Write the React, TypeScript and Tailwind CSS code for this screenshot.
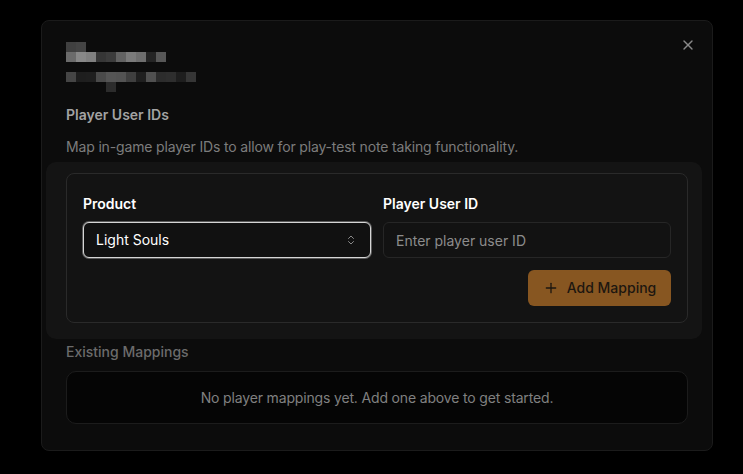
import React from 'react';
import { X, ChevronsUpDown, Plus } from 'lucide-react';

// redacted title, drawn as 10px blocks
const blurRows: { offset: number; shades: string[] }[] = [
  { offset: 0, shades: ['#404040', '#444444'] },
  {
    offset: 0,
    shades: ['#6b6b6b', '#888888', '#808080', '#363636', '#3c3c3c', '#626262', '#7a7a7a', '#6e6e6e', '#242424', '#575757'],
  },
  { offset: 0, shades: [] },
  {
    offset: 0,
    shades: ['#454545', '#1e1e1e', '#1f1f1f', '#4a4a4a', '#555555', '#535353', '#3f3f3f', '#1f1f1f', '#505050', '#2c2c2c', '#2e2e2e', '#1e1e1e', '#363636'],
  },
  { offset: 40, shades: ['#2c2c2c'] },
];

const RedactedTitle: React.FC = () => (
  <div className="flex flex-col">
    {blurRows.map((row, i) => (
      <div key={i} className="flex h-[10px]" style={{ paddingLeft: row.offset }}>
        {row.shades.map((c, j) => (
          <div key={j} className="h-[10px] w-[10px]" style={{ backgroundColor: c }} />
        ))}
      </div>
    ))}
  </div>
);

const App: React.FC = () => {
  return (
    <div
      className="min-h-screen w-full bg-black pt-5 pl-[41px]"
      style={{ fontFamily: 'Inter, "Noto Sans", sans-serif' }}
    >
      <div className="relative w-[672px] rounded-lg border border-[#1b1b1b] bg-[#0c0c0c] px-6 pt-[21px] pb-[26px]">
        <button className="absolute top-4 right-4 text-[#8a8a8a]">
          <X size={16} strokeWidth={2} />
        </button>

        <RedactedTitle />

        <h3 className="mt-[13px] text-sm leading-5 font-semibold text-[#a3a3a3]">Player User IDs</h3>
        <p className="mt-3 text-sm leading-5 tracking-[-0.16px] text-[#7c7c7c]">
          Map in-game player IDs to allow for play-test note taking functionality.
        </p>

        <div className="-ml-5 -mr-[14px] mt-[5px] rounded-[10px] bg-[#141414] pt-[11px] pb-4 pl-5 pr-[14px]">
          <div className="rounded-lg border border-[#2a2a2a] bg-[#131313] px-4 pt-5 pb-4">
            <div className="grid grid-cols-2 gap-3">
              <div>
                <label className="mb-2 block text-sm leading-5 font-semibold text-white">Product</label>
                <div className="flex h-9 items-center justify-between rounded-md border border-[#d6d6d6] bg-[#111111] pl-3 pr-[13px] ring-1 ring-[#5a5a5a]">
                  <span className="text-sm text-white">Light Souls</span>
                  <ChevronsUpDown size={12} className="text-[#8a8a8a]" />
                </div>
              </div>
              <div>
                <label className="mb-2 block text-sm leading-5 font-semibold text-white">Player User ID</label>
                <input
                  type="text"
                  placeholder="Enter player user ID"
                  className="h-9 w-full rounded-md border border-[#262626] bg-[#121212] px-3 text-sm text-white placeholder:text-[#8c8c8c] focus:outline-none"
                />
              </div>
            </div>
            <div className="mt-3 flex justify-end">
              <button className="flex h-9 w-[143px] items-center justify-center gap-2 rounded-md bg-[#875621] text-sm font-medium text-[#1d1710]">
                <Plus size={16} strokeWidth={2} />
                Add Mapping
              </button>
            </div>
          </div>
        </div>

        <h4 className="mt-[3px] text-sm leading-5 font-medium text-[#6b6b6b]">Existing Mappings</h4>
        <div className="mt-[9px] flex h-[53px] items-center justify-center rounded-[10px] border border-[#1c1c1c] bg-[#050505]">
          <p className="text-sm tracking-[-0.16px] text-[#808080]">
            No player mappings yet. Add one above to get started.
          </p>
        </div>
      </div>
    </div>
  );
};

export default App;
